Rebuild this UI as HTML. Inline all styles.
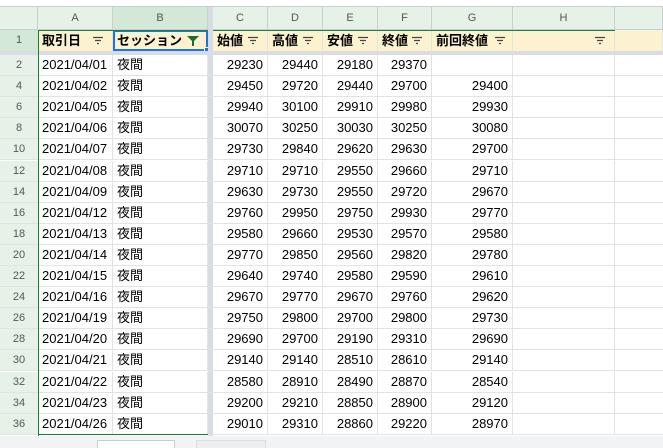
<!DOCTYPE html>
<html><head><meta charset="utf-8"><style>
*{margin:0;padding:0;box-sizing:border-box}
body{width:663px;height:448px;overflow:hidden;background:#fff;position:relative;font-family:"Liberation Sans","Noto Sans CJK JP",sans-serif;font-size:13px;color:#000}
.a{position:absolute}
.r{position:absolute;left:0;width:663px;height:21.1px;border-bottom:1px solid #e2e3e3}
.c{position:absolute;top:0;height:100%;line-height:20px;border-right:1px solid #e2e3e3;padding:0 4px;white-space:nowrap;overflow:hidden}
.n{text-align:right}
.rh{left:0;width:38px;background:#e6f2e8;color:#555;font-size:11px;text-align:center;border-right:none}
.ch{position:absolute;top:7px;height:23px;line-height:23px;text-align:center;color:#555;font-size:11px;background:#e6f2e8;border-right:1px solid #c8d0cc;border-bottom:1px solid #c8d0cc}
.h{position:absolute;top:30px;height:21px;line-height:21px;background:#fdf2cf;font-weight:bold;padding-left:4px;border-right:1px solid #e2e3e3;white-space:nowrap}
.f{position:absolute;right:8px;top:6px}
</style></head><body>
<div class="a" style="left:0;top:0;width:663px;height:7px;background:#fff;border-bottom:1px solid #c8d0cc"></div>
<div class="ch" style="left:0;width:38px"></div>
<div class="ch" style="left:38px;width:75px">A</div>
<div class="ch" style="left:113px;width:95px;background:#d3e8d6">B</div>
<div class="ch" style="left:213px;width:55px">C</div>
<div class="ch" style="left:268px;width:55px">D</div>
<div class="ch" style="left:323px;width:55px">E</div>
<div class="ch" style="left:378px;width:54px">F</div>
<div class="ch" style="left:432px;width:81px">G</div>
<div class="ch" style="left:513px;width:102px">H</div>
<div class="ch" style="left:615px;width:48px"></div>
<div class="a" style="left:0;top:30px;width:38px;height:21px;background:#d3e8d6;color:#555;font-size:11px;text-align:center;line-height:21px">1</div>
<div class="h" style="left:38px;width:75px">取引日<svg class="f" width="12" height="9"><path d="M1 1.5h10M3 4.5h6M5 7.5h2" stroke="#444" stroke-width="1.2"/></svg></div>
<div class="h" style="left:113px;width:95px">セッション<svg class="f" style="top:5px" width="12" height="11"><path d="M0 1h12L7 6v5H5V6z" fill="#1e6b35"/></svg></div>
<div class="a" style="left:113px;top:30px;width:95px;height:21px;border:2px solid #1a73e8"></div>
<div class="a" style="left:204px;top:47px;width:7px;height:7px;background:#1a73e8;border:1px solid #fff"></div>
<div class="h" style="left:213px;width:55px">始値<svg class="f" width="12" height="9"><path d="M1 1.5h10M3 4.5h6M5 7.5h2" stroke="#444" stroke-width="1.2"/></svg></div>
<div class="h" style="left:268px;width:55px">高値<svg class="f" width="12" height="9"><path d="M1 1.5h10M3 4.5h6M5 7.5h2" stroke="#444" stroke-width="1.2"/></svg></div>
<div class="h" style="left:323px;width:55px">安値<svg class="f" width="12" height="9"><path d="M1 1.5h10M3 4.5h6M5 7.5h2" stroke="#444" stroke-width="1.2"/></svg></div>
<div class="h" style="left:378px;width:54px">終値<svg class="f" width="12" height="9"><path d="M1 1.5h10M3 4.5h6M5 7.5h2" stroke="#444" stroke-width="1.2"/></svg></div>
<div class="h" style="left:432px;width:81px">前回終値<svg class="f" style="right:6px" width="12" height="9"><path d="M1 1.5h10M3 4.5h6M5 7.5h2" stroke="#444" stroke-width="1.2"/></svg></div>
<div class="h" style="left:513px;width:102px"><svg class="f" width="12" height="9"><path d="M1 1.5h10M3 4.5h6M5 7.5h2" stroke="#444" stroke-width="1.2"/></svg></div>
<div class="h" style="left:615px;width:48px"></div>
<div class="a" style="left:38px;top:30px;width:577px;height:1px;background:#188038"></div>
<div class="a" style="left:0;top:51px;width:663px;height:4px;background:#dadce3"></div>
<div class="a" style="left:208px;top:7px;width:5px;height:430px;background:#dadce3"></div>
<div id="rows"></div>
<script>
var d=[[2,"04/01",29230,29440,29180,29370,""],[4,"04/02",29450,29720,29440,29700,29400],[6,"04/05",29940,30100,29910,29980,29930],[8,"04/06",30070,30250,30030,30250,30080],[10,"04/07",29730,29840,29620,29630,29700],[12,"04/08",29710,29710,29550,29660,29710],[14,"04/09",29630,29730,29550,29720,29670],[16,"04/12",29760,29950,29750,29930,29770],[18,"04/13",29580,29660,29530,29570,29580],[20,"04/14",29770,29850,29560,29820,29780],[22,"04/15",29640,29740,29580,29590,29610],[24,"04/16",29670,29770,29670,29760,29620],[26,"04/19",29750,29800,29700,29800,29730],[28,"04/20",29690,29700,29190,29310,29690],[30,"04/21",29140,29140,28510,28610,29140],[32,"04/22",28580,28910,28490,28870,28540],[34,"04/23",29200,29210,28850,28900,29120],[36,"04/26",29010,29310,28860,29220,28970]];
var h="";
d.forEach(function(r,i){
h+='<div class="r" style="top:'+(55+i*21.1)+'px">'+
'<div class="c rh">'+r[0]+'</div>'+
'<div class="c" style="left:38px;width:75px">2021/'+r[1]+'</div>'+
'<div class="c" style="left:113px;width:95px">夜間</div>'+
'<div class="c n" style="left:213px;width:55px">'+r[2]+'</div>'+
'<div class="c n" style="left:268px;width:55px">'+r[3]+'</div>'+
'<div class="c n" style="left:323px;width:55px">'+r[4]+'</div>'+
'<div class="c n" style="left:378px;width:54px">'+r[5]+'</div>'+
'<div class="c n" style="left:432px;width:81px">'+r[6]+'</div>'+
'<div class="c" style="left:513px;width:102px"></div></div>';});
document.getElementById("rows").innerHTML=h;
</script>
<div class="a" style="left:38px;top:30px;width:1px;height:406px;background:#188038"></div>
<div class="a" style="left:38px;top:434px;width:170px;height:1px;background:#188038"></div>
<div class="a" style="left:0;top:436px;width:663px;height:12px;background:#f1f3f4"></div>
<div class="a" style="left:97px;top:440px;width:78px;height:8px;background:#fff;border:1px solid #ccc;border-bottom:none"></div>
<div class="a" style="left:196px;top:440px;width:70px;height:8px;background:#eceeef;border:1px solid #ddd;border-bottom:none"></div>
</body></html>
